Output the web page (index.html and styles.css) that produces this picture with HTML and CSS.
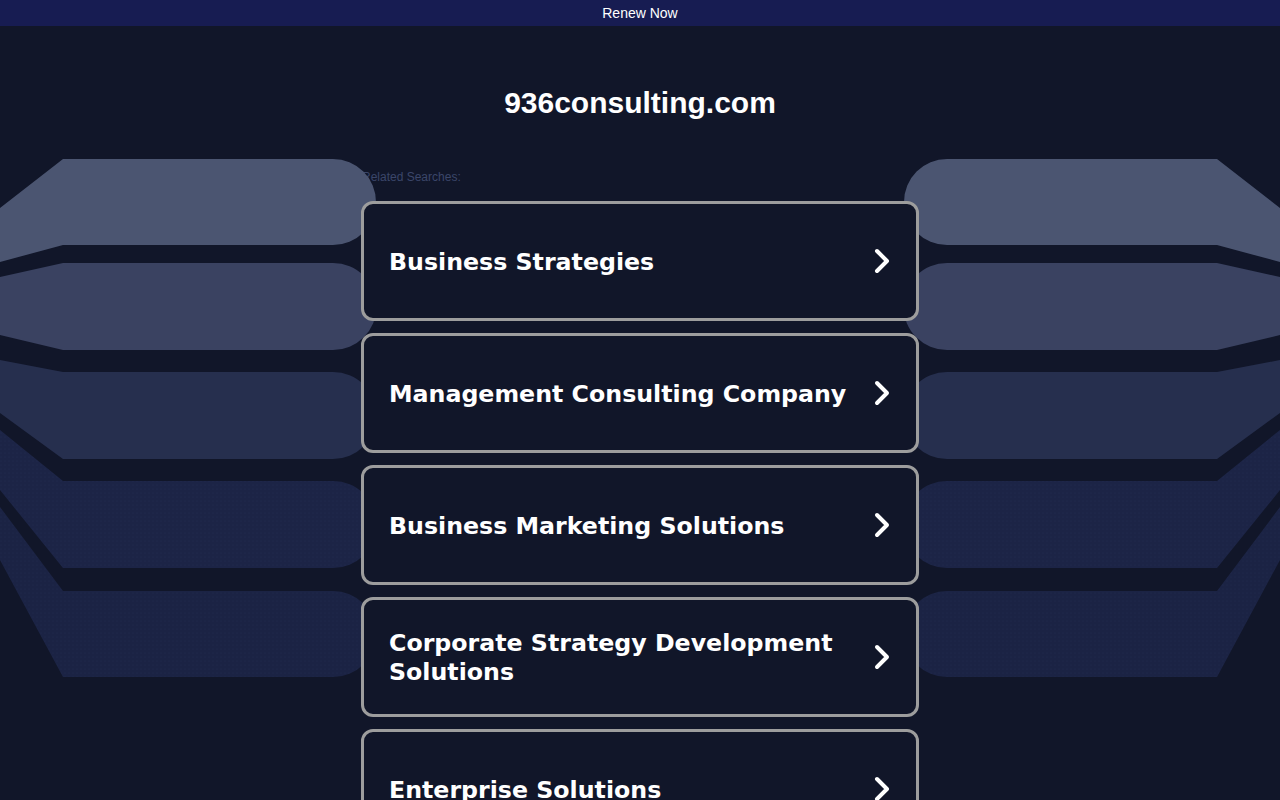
FILE: index.html
```html
<!DOCTYPE html>
<html lang="en">
<head>
<meta charset="utf-8">
<title>936consulting.com</title>
<link rel="stylesheet" href="styles.css">
</head>
<body>
<div class="topbar"><a class="renew" href="#">Renew Now</a></div>
<div class="page">
  <svg class="bg" width="1280" height="800" viewBox="0 0 1280 800" aria-hidden="true">
    <defs>
      <pattern id="dots" width="4" height="4" patternUnits="userSpaceOnUse">
        <rect width="4" height="4" fill="#1c2446"/>
        <circle cx="1" cy="1" r="0.5" fill="#232c52"/>
      </pattern>
      <pattern id="dots2" width="4" height="4" patternUnits="userSpaceOnUse">
        <rect width="4" height="4" fill="#1b2344"/>
        <circle cx="1" cy="1" r="0.5" fill="#222b50"/>
      </pattern>
      <g id="side">
        <path fill="#4b5571" d="M0 208 L63 159 L333 159 A43 43 0 0 1 333 245 L63 245 L0 262 Z"/>
        <path fill="#3a4261" d="M0 277 L63 263 L333 263 A43 43 0 0 1 333 350 L63 350 L0 335 Z"/>
        <path fill="#262f4e" d="M0 360 L63 372 L333 372 A43 43 0 0 1 333 459 L63 459 L0 413 Z"/>
        <path fill="url(#dots)" d="M0 430 L63 481 L333 481 A43 43 0 0 1 333 568 L63 568 L0 490 Z"/>
        <path fill="url(#dots2)" d="M0 507 L63 591 L333 591 A43 43 0 0 1 333 677 L63 677 L0 560 Z"/>
      </g>
    </defs>
    <use href="#side"/>
    <use href="#side" transform="translate(1280 0) scale(-1 1)"/>
  </svg>
  <h1 class="title">936consulting.com</h1>
  <div class="results">
    <p class="label">Related Searches:</p>
    <a class="card" href="#"><span class="card-text">Business Strategies</span><svg class="chev" width="18" height="28" viewBox="0 0 18 28"><path d="M4 4 L14 14 L4 24" fill="none" stroke="#fff" stroke-width="4" stroke-linecap="round" stroke-linejoin="round"/></svg></a>
    <a class="card" href="#"><span class="card-text">Management Consulting Company</span><svg class="chev" width="18" height="28" viewBox="0 0 18 28"><path d="M4 4 L14 14 L4 24" fill="none" stroke="#fff" stroke-width="4" stroke-linecap="round" stroke-linejoin="round"/></svg></a>
    <a class="card" href="#"><span class="card-text">Business Marketing Solutions</span><svg class="chev" width="18" height="28" viewBox="0 0 18 28"><path d="M4 4 L14 14 L4 24" fill="none" stroke="#fff" stroke-width="4" stroke-linecap="round" stroke-linejoin="round"/></svg></a>
    <a class="card" href="#"><span class="card-text">Corporate Strategy Development Solutions</span><svg class="chev" width="18" height="28" viewBox="0 0 18 28"><path d="M4 4 L14 14 L4 24" fill="none" stroke="#fff" stroke-width="4" stroke-linecap="round" stroke-linejoin="round"/></svg></a>
    <a class="card" href="#"><span class="card-text">Enterprise Solutions</span><svg class="chev" width="18" height="28" viewBox="0 0 18 28"><path d="M4 4 L14 14 L4 24" fill="none" stroke="#fff" stroke-width="4" stroke-linecap="round" stroke-linejoin="round"/></svg></a>
  </div>
</div>
</body>
</html>
```
FILE: styles.css
```css
html, body {
  margin: 0;
  padding: 0;
  background: #111629;
  font-family: "Liberation Sans", Arial, sans-serif;
  overflow: hidden;
}
.topbar {
  height: 26px;
  background: #171c52;
  display: flex;
  align-items: center;
  justify-content: center;
}
.renew {
  color: #fff;
  text-decoration: none;
  font-size: 14px;
  line-height: 16px;
}
.page {
  position: relative;
  height: 774px;
}
.bg {
  position: absolute;
  left: 0;
  top: -26px;
  z-index: 1;
  pointer-events: none;
}
.title {
  margin: 0;
  padding-top: 59px;
  text-align: center;
  color: #fff;
  font-size: 30px;
  line-height: 36px;
  font-weight: bold;
}
.results {
  width: 558px;
  margin: 0 auto;
  padding-top: 49px;
}
.label {
  position: relative;
  z-index: 0;
  margin: 0 0 17px 1px;
  font-size: 12px;
  line-height: 14px;
  color: #3b4669;
}
.card {
  position: relative;
  z-index: 2;
  display: flex;
  align-items: center;
  height: 114px;
  margin-bottom: 12px;
  padding: 0 25px 0 25px;
  border: 3px solid #9d9d9d;
  border-radius: 12px;
  background: #111629;
  color: #fff;
  text-decoration: none;
  gap: 22px;
}
.card-text {
  flex: 1;
  padding-top: 2px;
  font-family: "DejaVu Sans", Verdana, sans-serif;
  font-weight: bold;
  font-size: 23.7px;
  line-height: 29px;
}
.chev {
  flex: none;
}
```
